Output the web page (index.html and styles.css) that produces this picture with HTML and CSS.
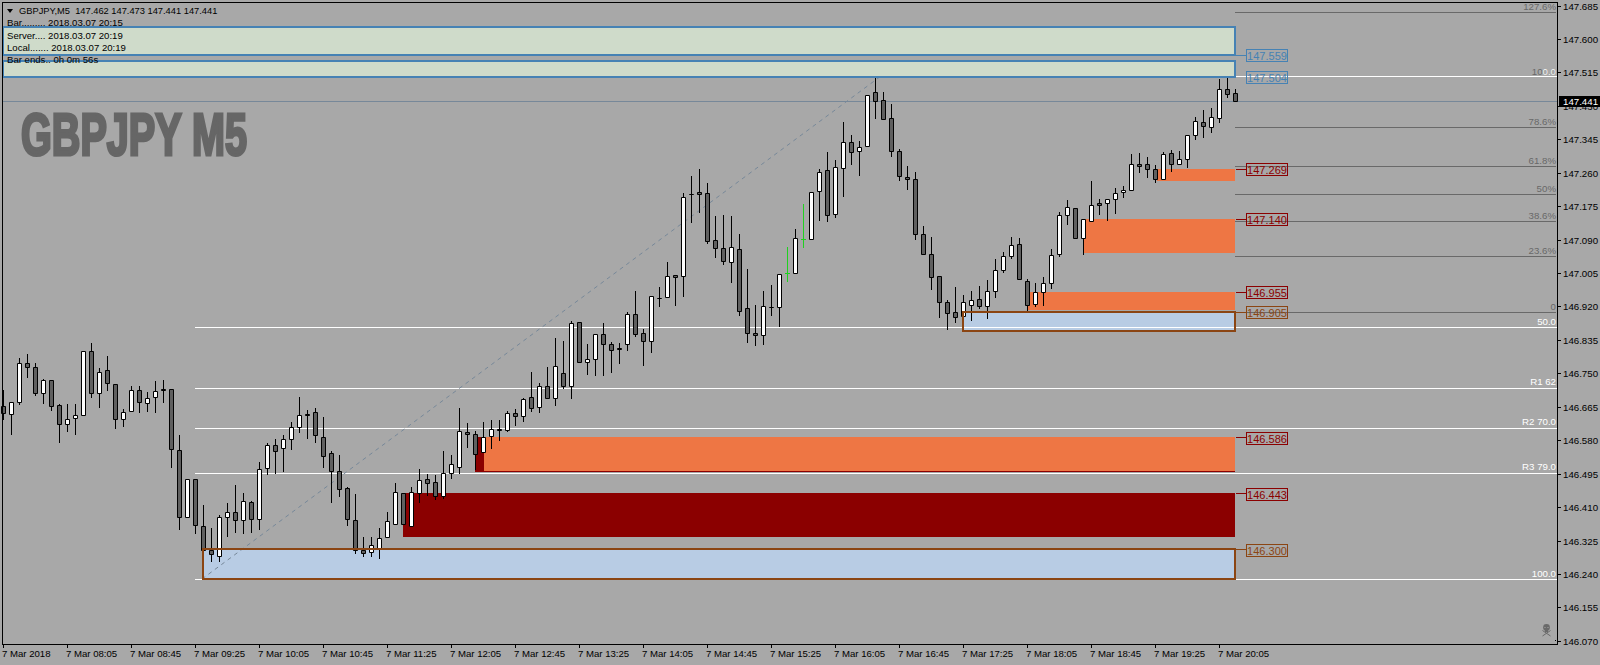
FILE: index.html
```html
<!DOCTYPE html>
<html lang="en">
<head>
    <meta charset="UTF-8">
    <title>GBPJPY,M5</title>
    <link rel="stylesheet" href="styles.css">
</head>
<body>

<div class="terminal">
    <div class="plot">
        <svg class="chart" width="1558" height="645" viewBox="0 0 1558 645">
            <!-- zone fills -->
            <rect class="zone-demand" x="203" y="549" width="1032" height="30"/>
            <rect class="zone-demand" x="963" y="312" width="272" height="19"/>
            <rect class="zone-dark" x="403" y="493" width="832" height="44"/>
            <rect class="zone-dark" x="475" y="437" width="760" height="35"/>
            <rect class="zone-orange" x="484" y="437" width="751" height="34"/>
            <rect class="zone-orange" x="1157" y="169" width="78" height="12"/>
            <rect class="zone-orange" x="1083" y="219" width="152" height="34"/>
            <rect class="zone-orange" x="1028" y="292" width="207" height="18"/>

            <!-- fibonacci levels -->
            <g class="line-fib">
                <line x1="1235" x2="1556" y1="12.5" y2="12.5"/>
                <line x1="1235" x2="1556" y1="127.5" y2="127.5"/>
                <line x1="1235" x2="1556" y1="166.5" y2="166.5"/>
                <line x1="1235" x2="1556" y1="194.5" y2="194.5"/>
                <line x1="1235" x2="1556" y1="221.5" y2="221.5"/>
                <line x1="1235" x2="1556" y1="256.5" y2="256.5"/>
                <line x1="1235" x2="1556" y1="312.5" y2="312.5"/>
            </g>
            <g class="line-white">
                <line x1="881" x2="1557" y1="76.5" y2="76.5"/>
                <line x1="195" x2="1557" y1="327.5" y2="327.5"/>
                <line x1="195" x2="1557" y1="388.5" y2="388.5"/>
                <line x1="195" x2="1557" y1="428.5" y2="428.5"/>
                <line x1="195" x2="1557" y1="473.5" y2="473.5"/>
                <line x1="195" x2="1557" y1="579.5" y2="579.5"/>
            </g>
            <line class="line-price" x1="3" x2="1557" y1="101.5" y2="101.5"/>
            <line class="line-trend" x1="202" y1="579" x2="881" y2="76"/>

            <g id="candles"></g>

            <!-- boxes go over the candles -->
            <rect class="box-demand" x="203" y="549" width="1032" height="30"/>
            <rect class="box-demand" x="963" y="312" width="272" height="19"/>
            <rect class="box-info" x="3" y="27" width="1232" height="28"/>
            <rect class="box-info" x="3" y="61" width="1232" height="16"/>

            <text class="watermark" x="21" y="155" textLength="226" lengthAdjust="spacingAndGlyphs">GBPJPY M5</text>

            <!-- price tags -->
            <g class="tag tag-blue">
                <line x1="1236" x2="1246" y1="55.5" y2="55.5"/>
                <rect x="1246.5" y="49.5" width="41" height="12"/>
                <text x="1267" y="59.5">147.559</text>
                <rect x="1246.5" y="71.5" width="41" height="12"/>
                <text x="1267" y="81.5">147.504</text>
            </g>
            <g class="tag tag-red">
                <line x1="1236" x2="1246" y1="169.5" y2="169.5"/>
                <rect x="1246.5" y="163.5" width="41" height="12"/>
                <text x="1267" y="173.5">147.269</text>
                <line x1="1236" x2="1246" y1="219.5" y2="219.5"/>
                <rect x="1246.5" y="213.5" width="41" height="12"/>
                <text x="1267" y="223.5">147.140</text>
                <line x1="1236" x2="1246" y1="292.5" y2="292.5"/>
                <rect x="1246.5" y="286.5" width="41" height="12"/>
                <text x="1267" y="296.5">146.955</text>
                <line x1="1236" x2="1246" y1="437.5" y2="437.5"/>
                <rect x="1246.5" y="432.5" width="41" height="12"/>
                <text x="1267" y="442.5">146.586</text>
                <line x1="1236" x2="1246" y1="493.5" y2="493.5"/>
                <rect x="1246.5" y="488.5" width="41" height="12"/>
                <text x="1267" y="498.5">146.443</text>
            </g>
            <g class="tag tag-brown">
                <line x1="1236" x2="1246" y1="312.5" y2="312.5"/>
                <rect x="1246.5" y="306.5" width="41" height="12"/>
                <text x="1267" y="316.5">146.905</text>
                <line x1="1236" x2="1246" y1="549.5" y2="549.5"/>
                <rect x="1246.5" y="544.5" width="41" height="12"/>
                <text x="1267" y="554.5">146.300</text>
            </g>

            <!-- level captions -->
            <g class="caption caption-dim">
                <text x="1556" y="10">127.6%</text>
                <text x="1556" y="75">100.0</text>
                <text x="1556" y="125">78.6%</text>
                <text x="1556" y="164">61.8%</text>
                <text x="1556" y="192">50%</text>
                <text x="1556" y="219">38.6%</text>
                <text x="1556" y="254">23.6%</text>
                <text x="1556" y="310">0</text>
            </g>
            <g class="caption caption-white">
                <text x="1556" y="75">0.0</text>
                <text x="1556" y="325">50.0</text>
                <text x="1556" y="385">R1 62</text>
                <text x="1556" y="425">R2 70.0</text>
                <text x="1556" y="470">R3 79.0</text>
                <text x="1556" y="577">100.0</text>
            </g>

            <g class="skull">
                <circle cx="1546.5" cy="627.5" r="3.4"/>
                <rect x="1545" y="629" width="3" height="3"/>
                <line x1="1542.5" y1="630.5" x2="1550.5" y2="636"/>
                <line x1="1550.5" y1="630.5" x2="1542.5" y2="636"/>
                <rect class="skull-eye" x="1544.5" y="627" width="1" height="1"/>
                <rect class="skull-eye" x="1547.5" y="627" width="1" height="1"/>
            </g>
            <rect class="axis-dot" x="1555" y="640" width="1" height="1"/>

            <rect class="frame" x="2.5" y="2.5" width="1555" height="642"/>
        </svg>

        <div class="legend">
            <div class="legend-title"><span class="legend-arrow"></span>GBPJPY,M5  147.462 147.473 147.441 147.441</div>
            <div>Bar......... 2018.03.07 20:15</div>
            <div>Server.... 2018.03.07 20:19</div>
            <div>Local....... 2018.03.07 20:19</div>
            <div>Bar ends.. 0h 0m 56s</div>
        </div>
    </div>

    <div class="price-axis">
        <span>147.685</span>
        <span>147.600</span>
        <span>147.515</span>
        <span>147.430</span>
        <span>147.345</span>
        <span>147.260</span>
        <span>147.175</span>
        <span>147.090</span>
        <span>147.005</span>
        <span>146.920</span>
        <span>146.835</span>
        <span>146.750</span>
        <span>146.665</span>
        <span>146.580</span>
        <span>146.495</span>
        <span>146.410</span>
        <span>146.325</span>
        <span>146.240</span>
        <span>146.155</span>
        <span>146.070</span>
        <div class="price-now">147.441</div>
    </div>

    <div class="time-axis">
        <span>7 Mar 2018</span>
        <span>7 Mar 08:05</span>
        <span>7 Mar 08:45</span>
        <span>7 Mar 09:25</span>
        <span>7 Mar 10:05</span>
        <span>7 Mar 10:45</span>
        <span>7 Mar 11:25</span>
        <span>7 Mar 12:05</span>
        <span>7 Mar 12:45</span>
        <span>7 Mar 13:25</span>
        <span>7 Mar 14:05</span>
        <span>7 Mar 14:45</span>
        <span>7 Mar 15:25</span>
        <span>7 Mar 16:05</span>
        <span>7 Mar 16:45</span>
        <span>7 Mar 17:25</span>
        <span>7 Mar 18:05</span>
        <span>7 Mar 18:45</span>
        <span>7 Mar 19:25</span>
        <span>7 Mar 20:05</span>
    </div>
</div>

<script src="candles.js"></script>
</body>
</html>
```

FILE: styles.css
```css
* {
    box-sizing: border-box;
    margin: 0;
    padding: 0;
    font-family: "Liberation Sans", Arial, sans-serif;
}

body {
    width: 1600px;
    height: 665px;
    overflow: hidden;
    background-color: #a8a8a8;
    color: #000;
}

.terminal {
    display: grid;
    grid-template-columns: 1558px 42px;
    grid-template-rows: 645px 20px;
    width: 1600px;
    height: 665px;
}

.plot {
    position: relative;
}

.chart {
    display: block;
    overflow: visible;
}

.frame {
    fill: none;
    stroke: #000;
    stroke-width: 1;
}

/* zones */
.zone-demand { fill: #b8cce4; }
.zone-dark { fill: #8b0000; }
.zone-orange { fill: #ee7644; }

.box-demand {
    fill: none;
    stroke: #8b4513;
    stroke-width: 2;
}

.box-info {
    fill: #cfdbca;
    stroke: #4682b4;
    stroke-width: 2;
}

/* levels */
.line-fib line {
    stroke: #696969;
    stroke-width: 1;
}

.line-white line {
    stroke: #fff;
    stroke-width: 1;
}

.line-price {
    stroke: #778899;
    stroke-width: 1;
}

.line-trend {
    stroke: #778899;
    stroke-width: 1;
    stroke-dasharray: 4 4;
}

/* candles */
.wick {
    stroke: #000;
    stroke-width: 1;
}

.body-up {
    fill: #fff;
    stroke: #000;
    stroke-width: 1;
}

.body-down {
    fill: #5f5f5f;
    stroke: #000;
    stroke-width: 1;
}

.wick-flat {
    stroke: #1fd11f;
    stroke-width: 1;
}

.watermark {
    font-size: 59px;
    font-weight: bold;
    fill: #666;
    stroke: #666;
    stroke-width: 3.2;
}

/* price tags */
.tag text {
    font-size: 11px;
    text-anchor: middle;
}

.tag rect {
    fill: none;
    stroke-width: 1;
}

.tag line {
    stroke-width: 1;
}

.tag-blue text { fill: #4682b4; }
.tag-blue rect, .tag-blue line { stroke: #4682b4; }
.tag-red text { fill: #8b0000; }
.tag-red rect, .tag-red line { stroke: #8b0000; }
.tag-brown text { fill: #8b4513; }
.tag-brown rect, .tag-brown line { stroke: #8b4513; }

.caption text {
    font-size: 9.7px;
    text-anchor: end;
}

.caption-dim text { fill: #696969; }
.caption-white text { fill: #fff; }

.skull { fill: #696969; }

.skull line {
    stroke: #696969;
    stroke-width: 1;
}

.skull .skull-eye { fill: #a8a8a8; }

.axis-dot { fill: #000; }

/* top left legend */
.legend {
    position: absolute;
    top: 5px;
    left: 7px;
    font-size: 9.6px;
    line-height: 12.3px;
    color: #000;
}

.legend div {
    white-space: pre;
}

.legend-title {
    font-size: 9.3px;
}

.legend-arrow {
    display: inline-block;
    width: 0;
    height: 0;
    margin-right: 6px;
    vertical-align: 1px;
    border-left: 3px solid transparent;
    border-right: 3px solid transparent;
    border-top: 4px solid #000;
}

/* axes */
.price-axis {
    position: relative;
    display: flex;
    flex-direction: column;
    padding-top: 0.5px;
    font-size: 9.7px;
    line-height: 11px;
}

.price-axis span {
    position: relative;
    flex: 0 0 33.45px;
    padding-left: 5px;
}

.price-axis span::before {
    content: "";
    position: absolute;
    left: 0;
    top: 5px;
    width: 3px;
    height: 1px;
    background-color: #000;
}

.price-now {
    position: absolute;
    top: 96px;
    left: 1px;
    width: 41px;
    height: 11px;
    padding-left: 4px;
    background-color: #000;
    color: #fff;
}

.time-axis {
    grid-column: 1 / 3;
    display: flex;
    padding-left: 3px;
    font-size: 9.6px;
    line-height: 11px;
    white-space: nowrap;
}

.time-axis span {
    position: relative;
    flex: 0 0 64px;
    padding-top: 3px;
    text-indent: -1px;
}

.time-axis span::before {
    content: "";
    position: absolute;
    left: 0;
    top: 0;
    width: 1px;
    height: 3px;
    background-color: #000;
}
```

FILE: candles.js
```js
// one row per bar, pixel rows: high, body top, body bottom, low, kind
// kind: 1 up, 0 down, 2 flat green bar
const bars = [
    [390,406,413,419,0],[402,402,414,434,1],[358,363,402,404,1],[354,363,367,377,0],[363,367,393,395,0],
    [379,380,393,403,1],[380,380,406,410,0],[404,405,424,442,0],[404,419,424,431,1],[404,415,418,434,1],
    [351,351,415,415,1],[343,351,393,397,0],[368,372,393,407,1],[356,370,383,390,0],[384,384,419,428,0],
    [409,412,419,426,1],[386,390,411,411,1],[386,390,402,412,0],[392,398,403,411,1],[381,391,397,412,1],
    [380,389,390,402,0],[389,389,449,467,0],[435,450,517,529,0],[479,479,517,517,1],[479,479,525,533,0],
    [505,526,550,551,0],[528,550,554,561,0],[515,517,556,561,1],[503,512,517,536,1],[485,512,520,532,0],
    [493,501,520,533,1],[501,502,519,532,0],[462,469,519,529,1],[443,445,468,474,1],[439,445,451,473,0],
    [435,439,448,471,1],[422,427,439,449,1],[397,415,427,432,1],[410,414,415,438,0],[408,412,435,442,0],
    [417,437,456,467,0],[451,453,471,502,0],[455,471,489,496,0],[487,488,519,525,0],[494,520,550,553,0],
    [537,550,553,556,0],[537,545,552,556,1],[528,538,548,558,1],[512,521,537,537,1],[483,492,524,524,1],
    [493,493,524,524,0],[487,492,526,526,1],[469,480,493,502,1],[474,479,483,495,0],[475,482,496,499,0],
    [451,473,496,498,1],[455,464,473,478,1],[408,431,467,473,1],[423,432,434,447,0],[431,434,454,469,0],
    [422,437,452,452,1],[420,429,436,448,1],[420,429,430,440,0],[411,413,430,431,1],[409,413,416,425,0],
    [398,399,416,421,1],[372,397,408,411,0],[383,386,407,412,1],[367,386,398,398,0],[338,366,398,405,1],
    [341,373,386,388,0],[321,323,386,398,1],[322,322,362,362,0],[344,359,362,374,1],[334,334,359,375,1],
    [323,334,344,375,0],[342,344,350,372,0],[343,348,349,363,0],[312,314,344,350,1],[291,314,334,336,0],
    [329,333,341,365,0],[296,296,341,352,1],[287,298,298,306,0],[262,276,297,297,1],[275,275,277,305,0],
    [193,197,276,296,1],[176,194,194,222,0],[169,192,194,212,0],[183,193,241,243,0],[216,240,248,257,0],
    [215,248,261,264,0],[216,247,262,282,1],[234,249,311,315,0],[269,308,333,342,0],[305,333,335,345,0],
    [291,306,335,344,1],[285,307,307,315,0],[274,274,307,326,1],[247,273,273,281,2],[229,238,273,273,1],
    [204,239,239,247,2],[192,192,239,239,1],[169,172,191,220,1],[152,170,215,221,0],[160,167,214,217,1],
    [122,142,168,196,1],[135,142,152,164,0],[141,147,151,175,1],[95,95,146,146,1],[78,92,101,118,0],
    [92,100,119,119,0],[104,118,151,156,0],[149,151,176,180,0],[166,177,179,189,0],[172,179,234,239,0],
    [226,234,254,254,0],[237,254,277,289,0],[276,276,302,317,0],[300,302,313,329,0],[287,312,317,322,0],
    [295,302,316,316,1],[291,300,305,320,1],[286,299,306,308,0],[280,291,306,318,1],[259,270,291,297,1],
    [252,256,270,272,1],[237,245,256,258,1],[238,244,279,279,0],[279,281,305,311,0],[283,292,304,306,1],
    [277,283,292,305,1],[249,255,283,288,1],[212,215,254,256,1],[200,207,215,224,1],[208,208,238,238,0],
    [219,219,238,254,1],[181,205,221,221,1],[199,203,205,214,0],[199,199,203,220,1],[188,193,199,213,1],
    [186,190,192,197,1],[154,164,190,190,1],[153,164,166,172,0],[157,164,169,177,0],[165,169,179,182,0],
    [152,154,179,179,1],[150,153,164,171,0],[151,159,164,164,1],[135,135,159,167,1],[117,121,135,139,1],
    [110,122,126,137,0],[108,117,127,132,1],[79,89,118,122,1],[77,89,94,97,0],[89,93,101,101,0]
];

const SVG_NS = "http://www.w3.org/2000/svg";
const group = document.getElementById("candles");

function add(tag, cls, attrs) {
    const el = document.createElementNS(SVG_NS, tag);
    el.setAttribute("class", cls);
    for (const key in attrs) el.setAttribute(key, attrs[key]);
    group.appendChild(el);
}

bars.forEach((bar, i) => {
    const [high, top, bottom, low, kind] = bar;
    const x = 3 + 8 * i;
    const wick = kind === 2 ? "wick-flat" : "wick";

    add("line", wick, { x1: x + 0.5, x2: x + 0.5, y1: high, y2: low + 1 });

    if (kind === 2) {
        add("line", wick, { x1: x - 2, x2: x + 3, y1: top + 0.5, y2: top + 0.5 });
    } else {
        const d = `M${x - 1.5} ${top + 0.5}h4v${bottom - top}h-4z`;
        add("path", kind === 1 ? "body-up" : "body-down", { d: d });
    }
});
```
